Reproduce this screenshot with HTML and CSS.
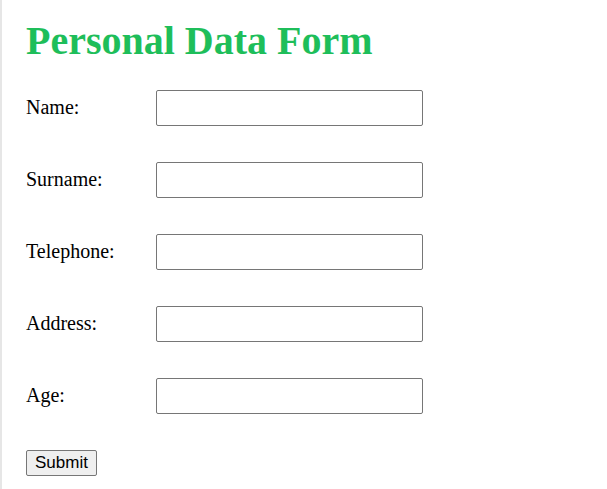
FILE: index.html
```html
<!DOCTYPE html>
<html lang="en">
<head>
<meta charset="utf-8">
<title>Personal Data Form</title>
<link rel="stylesheet" href="styles.css">
</head>
<body>
<div class="page">
  <h1 class="title">Personal Data Form</h1>
  <form class="form">
    <div class="row"><label class="label" for="name">Name:</label><input class="field" id="name" type="text"></div>
    <div class="row"><label class="label" for="surname">Surname:</label><input class="field" id="surname" type="text"></div>
    <div class="row"><label class="label" for="tel">Telephone:</label><input class="field" id="tel" type="text"></div>
    <div class="row"><label class="label" for="addr">Address:</label><input class="field" id="addr" type="text"></div>
    <div class="row"><label class="label" for="age">Age:</label><input class="field" id="age" type="text"></div>
    <div class="actions"><button class="submit" type="submit">Submit</button></div>
  </form>
</div>
</body>
</html>
```
FILE: styles.css
```css
html, body {
  margin: 0;
  padding: 0;
  background: #fff;
}
body {
  font-family: "Liberation Serif", "Times New Roman", serif;
  color: #000;
}
.page {
  border-left: 2px solid #e6e6e6;
  min-height: 489px;
  box-sizing: border-box;
  padding: 18px 24px 0 24px;
}
.title {
  margin: 0;
  font-size: 40px;
  font-weight: bold;
  color: #1ebe5a;
  line-height: 46px;
}
.form {
  margin-top: 26px;
  display: flex;
  flex-direction: column;
  gap: 36px;
}
.row {
  display: flex;
  align-items: center;
}
.label {
  width: 130px;
  font-size: 20px;
  line-height: 24px;
  margin-top: -2px;
}
.field {
  width: 267px;
  height: 36px;
  box-sizing: border-box;
  border: 1px solid #767676;
  border-radius: 2px;
  padding: 0 4px;
  margin: 0;
  font-size: 16px;
}
.actions {
  margin-top: 0;
}
.submit {
  font-family: "Liberation Sans", Arial, sans-serif;
  font-size: 17px;
  padding: 1px 8px;
  height: 26px;
  border: 1px solid #767676;
  border-radius: 2px;
  background: #efefef;
  color: #000;
}
```
